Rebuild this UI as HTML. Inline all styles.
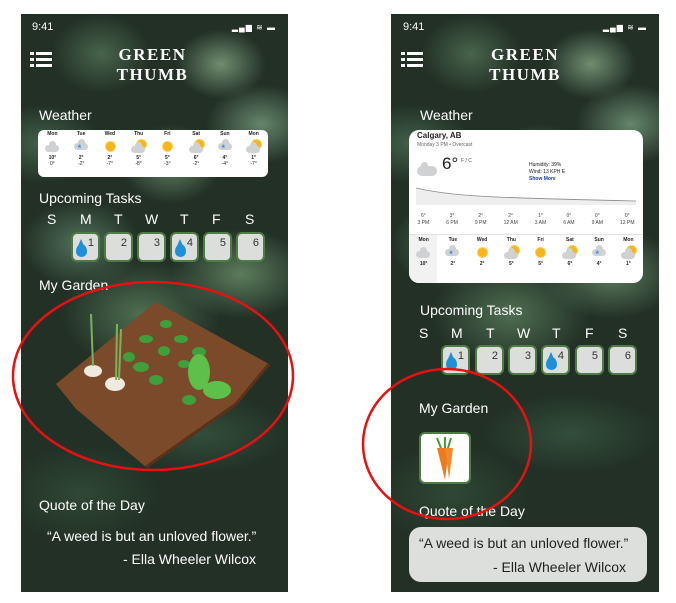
<!DOCTYPE html>
<html><head><meta charset="utf-8"><style>
*{margin:0;padding:0;box-sizing:border-box}
body{width:676px;height:603px;background:#fff;position:relative;overflow:hidden;font-family:"Liberation Sans",sans-serif}
.ph{position:absolute;top:14px;height:578px;overflow:hidden;
background:
radial-gradient(ellipse 45px 35px at 200px 50px,#6f8d6f 0,rgba(90,120,90,0) 100%),
radial-gradient(ellipse 55px 40px at 240px 110px,#65856a 0,rgba(90,120,90,0) 100%),
radial-gradient(ellipse 50px 40px at 150px 150px,#5e7f5e 0,rgba(90,120,90,0) 100%),
radial-gradient(ellipse 60px 45px at 60px 230px,#52725a 0,rgba(90,120,90,0) 100%),
radial-gradient(ellipse 70px 45px at 220px 260px,#5c7c5c 0,rgba(90,120,90,0) 100%),
radial-gradient(ellipse 80px 55px at 120px 300px,#4e6e50 0,rgba(90,120,90,0) 100%),
radial-gradient(ellipse 50px 40px at 80px 40px,#47644a 0,rgba(90,120,90,0) 100%),
radial-gradient(ellipse 60px 40px at 20px 130px,#41604a 0,rgba(90,120,90,0) 100%),
radial-gradient(ellipse 90px 40px at 180px 420px,#324e3a 0,rgba(0,0,0,0) 100%),
radial-gradient(ellipse 80px 50px at 60px 480px,#2f4834 0,rgba(0,0,0,0) 100%),
#223026}
.t{position:absolute;color:#fff}
.time{font-size:11px;top:7px}
.title{font-family:"Liberation Serif",serif;font-size:17px;letter-spacing:1.5px;text-align:center;line-height:20px;top:31px;width:100%;font-weight:bold}
.ham{position:absolute;top:38px;width:22px;height:16px}
.ham i{position:absolute;left:0;width:4px;height:3px;background:#fff}
.ham b{position:absolute;left:6px;width:16px;height:3px;background:#fff}
.lbl{font-size:14px}
.box{position:absolute;width:29px;height:30px;background:#dcdedb;border:2px solid #4f7b45;border-radius:6px}
.box span{position:absolute;right:4px;top:3px;font-size:11px;color:#333}
.drop{position:absolute;left:3px;bottom:3px;width:11px;height:13px;background:#1e8fd8;border-radius:50% 50% 50% 50%/60% 60% 40% 40%}
.drop:before{content:"";position:absolute;left:2px;top:-5px;border-left:3.5px solid transparent;border-right:3.5px solid transparent;border-bottom:7px solid #1e8fd8}
.dl{position:absolute;font-size:14px;color:#fff}
.ic{position:relative;height:14px;margin:2px auto}
.sun{position:absolute;width:9px;height:9px;border-radius:50%;background:#f6b51a;box-shadow:0 0 0 1px #fbd35a}
.cl{position:absolute;width:14px;height:7px;border-radius:5px;background:#cfd1d3}
.cl:before{content:"";position:absolute;left:4px;top:-4px;width:7px;height:7px;border-radius:50%;background:#cfd1d3}
.sn{position:absolute;color:#3a8ce8;font-size:9px;font-weight:bold}
</style></head><body>

<div class="ph" style="left:21px;width:267px">
 <div class="t time" style="left:11px">9:41</div>
 <div class="t" style="right:12px;top:9px;font-size:8px;letter-spacing:1px">▂▄▆ ≋ ▬</div>
 <div class="ham" style="left:9px"><i style="top:0"></i><b style="top:0"></b><i style="top:6px"></i><b style="top:6px"></b><i style="top:12px"></i><b style="top:12px"></b></div>
 <div class="t title" style="left:-2px">GREEN<br>THUMB</div>
 <div class="t lbl" style="left:18px;top:93px">Weather</div>
 <div style="position:absolute;left:17px;top:116px;width:230px;height:47px;background:#fff;border-radius:6px"></div>
 <div class="t lbl" style="left:18px;top:176px">Upcoming Tasks</div>
 <div class="dl" style="left:26px;top:197px">S</div><div class="dl" style="left:59px;top:197px">M</div><div class="dl" style="left:93px;top:197px">T</div><div class="dl" style="left:124px;top:197px">W</div><div class="dl" style="left:159px;top:197px">T</div><div class="dl" style="left:191px;top:197px">F</div><div class="dl" style="left:224px;top:197px">S</div>
 <div class="box" style="left:50px;top:218px"><div class="drop"></div><span>1</span></div>
 <div class="box" style="left:83px;top:218px"><span>2</span></div>
 <div class="box" style="left:116px;top:218px"><span>3</span></div>
 <div class="box" style="left:149px;top:218px"><div class="drop"></div><span>4</span></div>
 <div class="box" style="left:182px;top:218px"><span>5</span></div>
 <div class="box" style="left:215px;top:218px"><span>6</span></div>
 <div class="t lbl" style="left:18px;top:263px">My Garden</div>
 <svg style="position:absolute;left:0;top:280px" width="267" height="200">
  <path d="M135 8 L248 70 L215 110 L125 173 L55 115 L35 90 Z" fill="#7a4a2a"/>
  <path d="M125 173 L215 110 L248 70" fill="none" stroke="#5a3219" stroke-width="3"/>
  <ellipse cx="72" cy="77" rx="9" ry="6" fill="#efe9de"/><ellipse cx="94" cy="90" rx="10" ry="7" fill="#efe9de"/>
  <path d="M72 72 L70 20 M95 86 L96 30 M98 86 L100 35" stroke="#7ab35a" stroke-width="2"/>
  <g fill="#3da03b">
   <ellipse cx="145" cy="30" rx="6" ry="4"/><ellipse cx="125" cy="45" rx="7" ry="4"/><ellipse cx="160" cy="45" rx="7" ry="4"/>
   <ellipse cx="143" cy="57" rx="6" ry="5"/><ellipse cx="178" cy="58" rx="7" ry="5"/><ellipse cx="163" cy="70" rx="6" ry="4"/>
   <ellipse cx="108" cy="63" rx="6" ry="5"/><ellipse cx="120" cy="73" rx="8" ry="5"/><ellipse cx="135" cy="86" rx="7" ry="5"/>
   <ellipse cx="178" cy="78" rx="11" ry="18" fill="#5cc04a"/><ellipse cx="196" cy="96" rx="14" ry="9" fill="#5cc04a"/><ellipse cx="168" cy="106" rx="7" ry="5"/>
  </g>
 </svg>
 <div class="t lbl" style="left:18px;top:483px">Quote of the Day</div>
 <div class="t" style="left:26px;top:514px;font-size:14px">“A weed is but an unloved flower.”</div>
 <div class="t" style="left:102px;top:537px;font-size:14px">- Ella Wheeler Wilcox</div>
</div>

<div class="ph" style="left:391px;width:268px">
 <div class="t time" style="left:12px">9:41</div>
 <div class="t" style="right:12px;top:9px;font-size:8px;letter-spacing:1px">▂▄▆ ≋ ▬</div>
 <div class="ham" style="left:10px"><i style="top:0"></i><b style="top:0"></b><i style="top:6px"></i><b style="top:6px"></b><i style="top:12px"></i><b style="top:12px"></b></div>
 <div class="t title" style="left:0">GREEN<br>THUMB</div>
 <div class="t lbl" style="left:29px;top:93px">Weather</div>
 <div style="position:absolute;left:18px;top:116px;width:234px;height:153px;background:#fff;border-radius:10px;overflow:hidden;color:#222">
  <div style="position:absolute;left:8px;top:1px;font-size:8px;font-weight:bold">Calgary, AB</div>
  <div style="position:absolute;left:8px;top:12px;font-size:5px;color:#666">Monday 3 PM • Overcast</div>
  <div class="cl" style="left:8px;top:36px;width:20px;height:10px"></div>
  <div style="position:absolute;left:33px;top:24px;font-size:17px">6°</div>
  <div style="position:absolute;left:52px;top:28px;font-size:5px;color:#555">F / C</div>
  <div style="position:absolute;left:120px;top:32px;font-size:5px;line-height:7px">Humidity: 39%<br>Wind: 13 KPH E<br><b style="color:#1a3fb0">Show More</b></div>
  <svg style="position:absolute;left:7px;top:55px" width="220" height="20"><path d="M0 3 Q30 10 80 12 T220 16 L220 20 L0 20Z" fill="#eee"/><path d="M0 3 Q30 10 80 12 T220 16" stroke="#888" fill="none" stroke-width=".8"/></svg>
  <div style="position:absolute;left:0;top:83px;width:234px;font-size:5px;color:#444;display:flex;justify-content:space-around;text-align:center;line-height:7px">
   <span>6°<br>3 PM</span><span>3°<br>6 PM</span><span>2°<br>9 PM</span><span>2°<br>12 AM</span><span>1°<br>3 AM</span><span>0°<br>6 AM</span><span>0°<br>9 AM</span><span>0°<br>12 PM</span></div>
  <div style="position:absolute;left:0;top:104px;width:28px;height:50px;background:#f2f2f2;border-top:1px solid #999"></div>
  <div style="position:absolute;left:0;top:104px;width:234px;border-top:1px solid #e3e3e3"></div>
  <div style="position:absolute;left:0;top:107px;width:234px;display:flex;font-size:5px;text-align:center;font-weight:bold">
   <div style="flex:1">Mon<div class="ic"><div class="cl" style="left:7px;top:6px"></div></div>10°</div>
   <div style="flex:1">Tue<div class="ic"><div class="cl" style="left:7px;top:4px"></div><div class="sn" style="left:11px;top:4px">*</div></div>2°</div>
   <div style="flex:1">Wed<div class="ic"><div class="sun" style="left:10px;top:3px"></div></div>2°</div>
   <div style="flex:1">Thu<div class="ic"><div class="sun" style="left:13px;top:1px"></div><div class="cl" style="left:7px;top:7px"></div></div>5°</div>
   <div style="flex:1">Fri<div class="ic"><div class="sun" style="left:10px;top:3px"></div></div>5°</div>
   <div style="flex:1">Sat<div class="ic"><div class="sun" style="left:13px;top:1px"></div><div class="cl" style="left:7px;top:7px"></div></div>6°</div>
   <div style="flex:1">Sun<div class="ic"><div class="cl" style="left:7px;top:4px"></div><div class="sn" style="left:11px;top:4px">*</div></div>4°</div>
   <div style="flex:1">Mon<div class="ic"><div class="sun" style="left:13px;top:1px"></div><div class="cl" style="left:7px;top:7px"></div></div>1°</div>
  </div>
 </div>
 <div class="t lbl" style="left:29px;top:288px">Upcoming Tasks</div>
 <div class="dl" style="left:28px;top:311px">S</div><div class="dl" style="left:60px;top:311px">M</div><div class="dl" style="left:95px;top:311px">T</div><div class="dl" style="left:126px;top:311px">W</div><div class="dl" style="left:161px;top:311px">T</div><div class="dl" style="left:194px;top:311px">F</div><div class="dl" style="left:227px;top:311px">S</div>
 <div class="box" style="left:50px;top:331px"><div class="drop"></div><span>1</span></div>
 <div class="box" style="left:84px;top:331px"><span>2</span></div>
 <div class="box" style="left:117px;top:331px"><span>3</span></div>
 <div class="box" style="left:150px;top:331px"><div class="drop"></div><span>4</span></div>
 <div class="box" style="left:184px;top:331px"><span>5</span></div>
 <div class="box" style="left:217px;top:331px"><span>6</span></div>
 <div class="t lbl" style="left:28px;top:386px">My Garden</div>
 <div style="position:absolute;left:28px;top:418px;width:52px;height:52px;background:#fff;border:2px solid #4f7b45;border-radius:6px">
  <svg width="48" height="48"><path d="M16 4 L20 14 M24 3 L24 14 M30 4 L27 14" stroke="#4c9a3a" stroke-width="2"/><path d="M16 14 L28 14 L24 46 Z" fill="#ec7a1e"/><path d="M24 14 L32 14 L28 45 Z" fill="#f08a2a"/></svg>
 </div>
 <div class="t lbl" style="left:28px;top:489px">Quote of the Day</div>
 <div style="position:absolute;left:18px;top:513px;width:238px;height:55px;background:#dcdfdb;border-radius:12px;color:#222;font-size:14px">
  <div style="position:absolute;left:10px;top:8px">“A weed is but an unloved flower.”</div>
  <div style="position:absolute;left:84px;top:32px">- Ella Wheeler Wilcox</div>
 </div>
</div>

<div style="position:absolute;left:38px;top:131px;width:230px;display:flex;font-size:5px;text-align:center;font-weight:bold;color:#222">
 <div style="flex:1">Mon<div class="ic"><div class="cl" style="left:7px;top:6px"></div></div>10°<br><span style="font-weight:normal">0°</span></div>
 <div style="flex:1">Tue<div class="ic"><div class="cl" style="left:7px;top:4px"></div><div class="sn" style="left:11px;top:4px">*</div></div>2°<br><span style="font-weight:normal">-2°</span></div>
 <div style="flex:1">Wed<div class="ic"><div class="sun" style="left:10px;top:3px"></div></div>2°<br><span style="font-weight:normal">-7°</span></div>
 <div style="flex:1">Thu<div class="ic"><div class="sun" style="left:13px;top:1px"></div><div class="cl" style="left:7px;top:7px"></div></div>5°<br><span style="font-weight:normal">-8°</span></div>
 <div style="flex:1">Fri<div class="ic"><div class="sun" style="left:10px;top:3px"></div></div>5°<br><span style="font-weight:normal">-3°</span></div>
 <div style="flex:1">Sat<div class="ic"><div class="sun" style="left:13px;top:1px"></div><div class="cl" style="left:7px;top:7px"></div></div>6°<br><span style="font-weight:normal">-2°</span></div>
 <div style="flex:1">Sun<div class="ic"><div class="cl" style="left:7px;top:4px"></div><div class="sn" style="left:11px;top:4px">*</div></div>4°<br><span style="font-weight:normal">-4°</span></div>
 <div style="flex:1">Mon<div class="ic"><div class="sun" style="left:13px;top:1px"></div><div class="cl" style="left:7px;top:7px"></div></div>1°<br><span style="font-weight:normal">-7°</span></div>
</div>

<svg style="position:absolute;left:0;top:0" width="676" height="603">
 <ellipse cx="153" cy="376" rx="140" ry="94" fill="none" stroke="#e81010" stroke-width="2.5"/>
 <ellipse cx="447" cy="444" rx="84" ry="75" fill="none" stroke="#e81010" stroke-width="2.5"/>
</svg>
</body></html>
